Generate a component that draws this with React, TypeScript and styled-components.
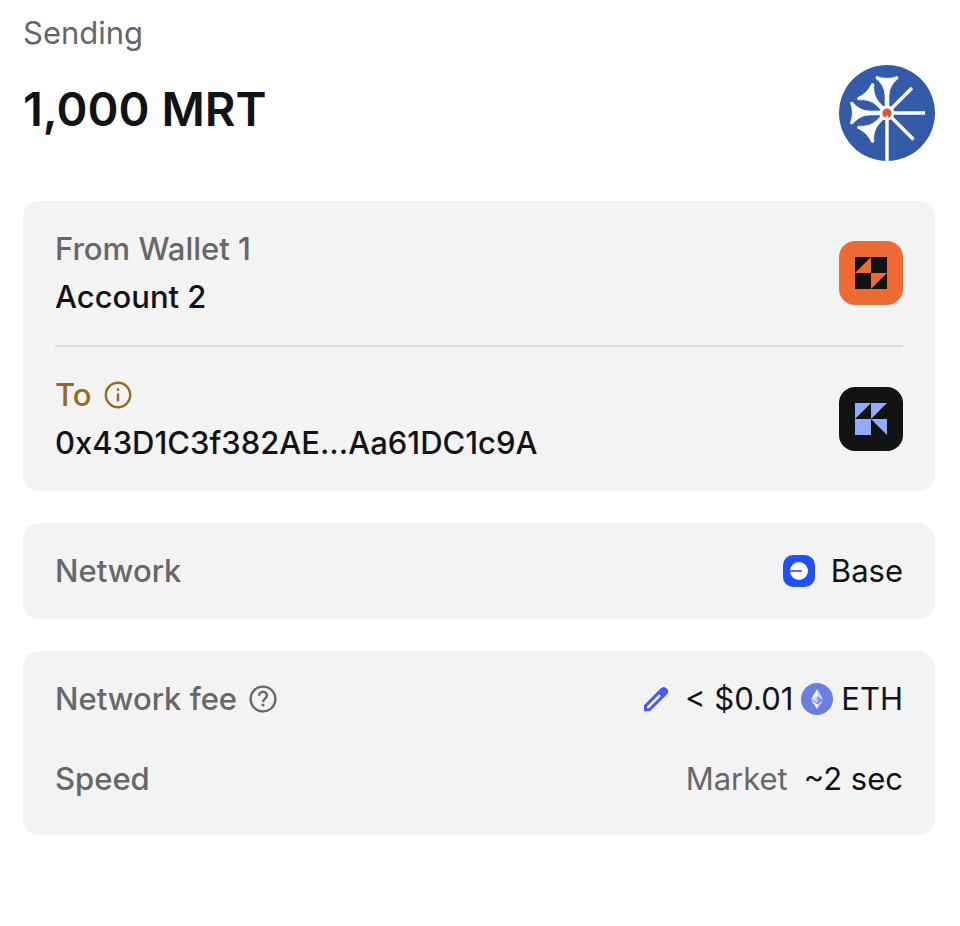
import { ReactNode } from "react"
import styled, { createGlobalStyle } from "styled-components"

const colors = {
  text: "#121314",
  muted: "#66676a",
  warning: "#946a22",
  primary: "#4459ff",
  card: "#f3f3f3",
  divider: "#d9dadb",
}

const GlobalStyle = createGlobalStyle`
  * {
    box-sizing: border-box;
  }

  body {
    margin: 0;
    background: #ffffff;
    color: ${colors.text};
    font-family: Inter, "Liberation Sans", sans-serif;
    font-size: 31px;
    line-height: 48px;
  }
`

const funnel =
  "M37.5 11.4 Q48 15.5 58.5 11.4 L59 13.4 Q50.5 20 49.9 30 L49.8 40 Q50 43 53 45 L43 45 Q46 43 46.2 40 L46.1 30 Q45.5 20 37 13.4 Z"

const TokenIcon = () => (
  <svg width="96" height="96" viewBox="0 0 96 96" aria-hidden="true">
    <circle cx="48" cy="48" r="48" fill="#345ba8" />
    <g fill="#fff" stroke="#fff" strokeWidth="0.8" strokeLinejoin="round">
      <path d={funnel} />
      <path d={funnel} transform="rotate(-45 48 48) translate(0 5)" />
      <path d={funnel} transform="rotate(-90 48 48)" />
      <path d={funnel} transform="rotate(-135 48 48) translate(0 5)" />
    </g>
    <path
      d="M48 48 L73 23 M48 48 H86 M48 48 L74.5 74.5 M48 48 V96"
      stroke="#fff"
      strokeWidth="3.4"
    />
    <circle cx="48" cy="48" r="7.4" fill="#fff" />
    <circle cx="48" cy="48.2" r="4.6" fill="#d9573f" />
    <path d="M48 53.5 V51.5" stroke="#fff" strokeWidth="1.8" strokeLinecap="round" />
  </svg>
)

const SenderAvatar = () => (
  <svg width="32" height="32" viewBox="0 0 32 32" aria-hidden="true">
    <path fill="#121314" d="M0 0h32v32H0z" />
    <path fill="#ee6a33" d="M16 0v16H0zM16 16h16L16 32z" />
  </svg>
)

const RecipientAvatar = () => (
  <svg width="32" height="32" viewBox="0 0 32 32" aria-hidden="true">
    <path
      fill="#8fadfa"
      d="M0 0h16L0 16zM16 0h16L16 16zM0 16h16v16H0zM16 16h16v16z"
    />
  </svg>
)

const BaseIcon = () => (
  <svg width="32" height="32" viewBox="0 0 32 32" aria-hidden="true">
    <rect width="32" height="32" rx="10" fill="#2151f5" />
    <circle cx="16" cy="16" r="9" fill="#fff" />
    <path fill="#2151f5" d="M7 15.2h12v1.6H7z" />
  </svg>
)

const EthIcon = () => (
  <svg width="32" height="32" viewBox="0 0 32 32" aria-hidden="true">
    <circle cx="16" cy="16" r="16" fill="#6a7fe0" />
    <g fill="#fff">
      <path fillOpacity="0.65" d="M16.2 6v7.4l6 2.8z" />
      <path d="M16.2 6l-6 10.2 6-2.8z" />
      <path fillOpacity="0.65" d="M16.2 21.2V26l6-8.4z" />
      <path d="M16.2 26v-4.8l-6-3.6z" />
      <path fillOpacity="0.25" d="M16.2 20l6-3.8-6-2.8z" />
      <path fillOpacity="0.65" d="M10.2 16.2l6 3.8v-6.6z" />
    </g>
  </svg>
)

const InfoIcon = () => (
  <svg width="28" height="28" viewBox="0 0 28 28" fill="none" aria-hidden="true">
    <circle cx="14" cy="14" r="12.2" stroke="currentColor" strokeWidth="2.4" />
    <circle cx="14" cy="8.6" r="1.4" fill="currentColor" />
    <path d="M14 12.4v8" stroke="currentColor" strokeWidth="2.4" />
  </svg>
)

const QuestionIcon = () => (
  <svg width="28" height="28" viewBox="0 0 28 28" fill="none" aria-hidden="true">
    <circle cx="14" cy="14" r="12.4" stroke="currentColor" strokeWidth="2.4" />
    <path
      d="M10.1 10.7c0-2.1 1.7-3.8 3.9-3.8s3.9 1.6 3.9 3.7c0 3-3.8 3.1-3.8 6.5"
      stroke="currentColor"
      strokeWidth="2.4"
    />
    <circle cx="14" cy="20" r="1.6" fill="currentColor" />
  </svg>
)

const PencilIcon = () => (
  <svg width="26" height="26" viewBox="0 0 26 26" aria-hidden="true">
    <path
      fill="currentColor"
      fillRule="evenodd"
      d="M1 19.2L17.6 2.4q3.2-3 6.2 0t0 6.2L7 25.2H1zM4 20.4v1.8h1.8L18 10 16.2 8.2z"
    />
  </svg>
)

type RowProps = { label: string; tip?: ReactNode; children: ReactNode }

const DetailRow = ({ label, tip, children }: RowProps) => (
  <Row>
    <Label>
      {label}
      {tip}
    </Label>
    <Value>{children}</Value>
  </Row>
)

const App = () => {
  return (
    <>
      <GlobalStyle />
      <Page>
        <Caption>Sending</Caption>
        <AmountRow>
          <Amount>1,000 MRT</Amount>
          <TokenIcon />
        </AmountRow>

        <Cards>
          <Card>
            <Row>
              <div>
                <Label>From Wallet 1</Label>
                <Account>Account 2</Account>
              </div>
              <Avatar $color="#ee6a33">
                <SenderAvatar />
              </Avatar>
            </Row>
            <Divider />
            <Row>
              <div>
                <Label $warning>
                  To
                  <IconButton type="button" aria-label="Recipient information" $gap={12}>
                    <InfoIcon />
                  </IconButton>
                </Label>
                <Account>0x43D1C3f382AE...Aa61DC1c9A</Account>
              </div>
              <Avatar $color="#121314">
                <RecipientAvatar />
              </Avatar>
            </Row>
          </Card>

          <Card>
            <DetailRow label="Network">
              <BaseIcon />
              <Spaced>Base</Spaced>
            </DetailRow>
          </Card>

          <Card $last>
            <DetailRow
              label="Network fee"
              tip={
                <IconButton type="button" aria-label="About network fee" $gap={12}>
                  <QuestionIcon />
                </IconButton>
              }
            >
              <EditButton type="button" aria-label="Edit network fee">
                <PencilIcon />
              </EditButton>
              <Fee>
                <span>&lt; $0.01</span>
                <EthIcon />
                <span>ETH</span>
              </Fee>
            </DetailRow>
            <DetailRow label="Speed">
              <Muted>Market</Muted>
              <Spaced>~2 sec</Spaced>
            </DetailRow>
          </Card>
        </Cards>
      </Page>
    </>
  )
}

const Page = styled.main`
  padding: 9px 25px 24px 23px;

  svg {
    display: block;
    flex-shrink: 0;
  }
`

const Caption = styled.div`
  color: ${colors.muted};
`

const AmountRow = styled.div`
  display: flex;
  align-items: center;
  justify-content: space-between;

  svg {
    margin-top: 8px;
  }
`

const Amount = styled.h1`
  margin: 0;
  font-size: 47px;
  line-height: 64px;
  font-weight: 600;
`

const Cards = styled.div`
  display: flex;
  flex-direction: column;
  gap: 32px;
  margin-top: 40px;
`

const Card = styled.section<{ $last?: boolean }>`
  display: flex;
  flex-direction: column;
  gap: 32px;
  padding: 24px 32px ${({ $last }) => ($last ? "32px" : "24px")};
  border-radius: 16px;
  background: ${colors.card};

  &:first-child {
    gap: 24px;
  }
`

const Row = styled.div`
  display: flex;
  align-items: center;
  justify-content: space-between;
`

const Label = styled.div<{ $warning?: boolean }>`
  display: flex;
  align-items: center;
  color: ${({ $warning }) => ($warning ? colors.warning : colors.muted)};
  font-weight: 500;
`

const Account = styled.div`
  font-weight: 500;
`

const Avatar = styled.div<{ $color: string }>`
  padding: 16px;
  border-radius: 16px;
  background: ${({ $color }) => $color};
`

const Divider = styled.hr`
  width: 100%;
  height: 2px;
  margin: 0;
  border: 0;
  background: ${colors.divider};
`

const Value = styled.div`
  display: flex;
  align-items: center;
`

const Spaced = styled.span`
  margin-left: 16px;
`

const Muted = styled.span`
  color: ${colors.muted};
`

const IconButton = styled.button<{ $gap: number }>`
  margin: 0 0 0 ${({ $gap }) => $gap}px;
  padding: 0;
  border: 0;
  background: none;
  color: inherit;
  cursor: pointer;
`

const EditButton = styled.button`
  margin: 0 16px 0 0;
  padding: 0;
  border: 0;
  background: none;
  color: ${colors.primary};
  cursor: pointer;
`

const Fee = styled.div`
  display: flex;
  align-items: center;
  gap: 8px;
`

export default App
